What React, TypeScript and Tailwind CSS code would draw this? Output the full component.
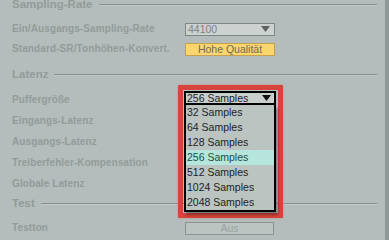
const font = { fontFamily: '"Liberation Sans", Arial, sans-serif' }

const options = ["32 Samples", "64 Samples", "128 Samples", "256 Samples", "512 Samples", "1024 Samples", "2048 Samples"]

function SectionHeader({ title, className }: { title: string; className?: string }) {
  return (
    <div className={`flex items-center h-[12px] pl-[12px] pr-[8px] ${className ?? ""}`}>
      <span className="text-[11.5px] font-bold text-[#939b99] leading-none">{title}</span>
      <div className="flex-1 ml-[6px] flex flex-col">
        <div className="h-[1px] bg-[#878f8d]" />
        <div className="h-[1px] bg-[#c3cac8]" />
      </div>
    </div>
  )
}

function Row({ label, children, className }: { label: string; children?: React.ReactNode; className?: string }) {
  return (
    <div className={`flex items-center pl-[12px] ${className ?? "h-[20px]"}`}>
      <span className="w-[173px] text-[10px] tracking-[0.1px] font-bold text-[#939b99] leading-none">{label}</span>
      {children}
    </div>
  )
}

function Triangle({ color }: { color: string }) {
  return (
    <svg width="9" height="6" viewBox="0 0 9 6">
      <polygon points="0,0 9,0 4.5,6" fill={color} />
    </svg>
  )
}

export default function App() {
  return (
    <div style={font} className="w-[389px] h-[240px] overflow-hidden bg-[#b4bdbb] flex">
      <div className="flex-1 flex flex-col -mt-[1px]">
        <SectionHeader title="Sampling-Rate" />
        <Row label="Ein/Ausgangs-Sampling-Rate" className="h-[20px] mt-[8px]">
          <div className="w-[90px] h-[13px] border border-[#7f8785] bg-[#cbd2d0] flex items-center justify-between pl-[2px] pr-[4px]">
            <span className="text-[10.5px] text-[#7b8381] leading-none">44100</span>
            <Triangle color="#5d6462" />
          </div>
        </Row>
        <Row label="Standard-SR/Tonhöhen-Konvert.">
          <div className="w-[90px] h-[13px] border border-[#c4a24c] bg-[#fbd66e] flex items-center justify-center">
            <span className="text-[10.5px] text-[#6d6a58] leading-none">Hohe Qualität</span>
          </div>
        </Row>
        <SectionHeader title="Latenz" className="mt-[9px] h-[13px]" />
        <div className="relative mt-[8px]">
          <Row label="Puffergröße" className="h-[21px]" />
          <Row label="Eingangs-Latenz" className="h-[21px]" />
          <Row label="Ausgangs-Latenz" className="h-[21px]" />
          <Row label="Treiberfehler-Kompensation" className="h-[21px]" />
          <Row label="Globale Latenz" className="h-[21px]" />
          <SectionHeader title="Test" className="mt-[4px]" />

          <div className="absolute left-[178px] top-[-4px] w-[105px] h-[133px] border-[5px] border-[#d6453d] rounded-[1px] shadow-[0_0_2px_#e07a74] p-[1px] z-10">
            <div className="w-[92px] h-[14px] border-2 border-black bg-[#c8cfcd] flex items-center justify-between pl-[1px] pr-[3px]">
              <span className="text-[10.5px] text-[#1c1c1c] leading-none">256 Samples</span>
              <Triangle color="#111" />
            </div>
            <div className="w-[92px] border-x-2 border-b-2 border-black bg-[#bcc4c2] shadow-[2px_3px_3px_rgba(0,0,0,0.35)]">
              {options.map((o) => (
                <div
                  key={o}
                  className={`h-[15px] flex items-center pl-[1px] text-[10.5px] leading-none ${
                    o === "256 Samples" ? "bg-[#b6e5dd] text-[#1d4c46]" : "text-[#222]"
                  }`}
                >
                  {o}
                </div>
              ))}
            </div>
          </div>
        </div>
        <Row label="Testton" className="h-[20px] mt-[8px]">
          <div className="w-[89px] h-[13px] border border-[#8b9391] bg-[#bcc4c2] flex items-center justify-center">
            <span className="text-[10.5px] text-[#9aa2a0] leading-none">Aus</span>
          </div>
        </Row>
      </div>
      <div className="w-[4px] bg-[#8e9896]" />
    </div>
  )
}
